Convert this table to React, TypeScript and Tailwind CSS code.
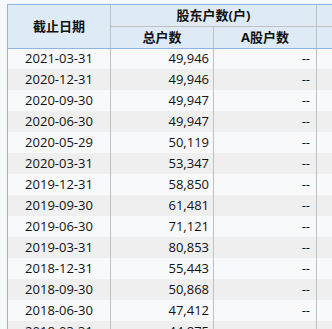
const rows: [string, string][] = [
  ['2021-03-31', '49,946'],
  ['2020-12-31', '49,946'],
  ['2020-09-30', '49,947'],
  ['2020-06-30', '49,947'],
  ['2020-05-29', '50,119'],
  ['2020-03-31', '53,347'],
  ['2019-12-31', '58,850'],
  ['2019-09-30', '61,481'],
  ['2019-06-30', '71,121'],
  ['2019-03-31', '80,853'],
  ['2018-12-31', '55,443'],
  ['2018-09-30', '50,868'],
  ['2018-06-30', '47,412'],
  ['2018-03-31', '44,875'],
];

export default function App() {
  return (
    <div
      className="w-[332px] h-[329px] overflow-hidden bg-[#f5f8fc] pl-[7px] pt-[4px] text-[13px] text-[#111]"
      style={{ fontFamily: '"Open Sans", "Noto Sans CJK SC", sans-serif' }}
    >
      <div className="w-[400px] border-l border-t border-[#8fb4e4]">
        {/* header */}
        <div className="flex h-[44px] bg-[#dfeaf7] border-b border-[#8fb4e4] font-bold">
          <div className="w-[103px] shrink-0 border-r border-[#c0c0c0] flex items-center justify-center">
            截止日期
          </div>
          <div className="w-[206px] shrink-0 border-r border-[#c0c0c0] flex flex-col">
            <div className="h-[22px] border-b border-[#c0c0c0] flex items-center justify-center">
              股东户数(户)
            </div>
            <div className="h-[21px] flex">
              <div className="w-[103px] border-r border-[#c0c0c0] flex items-center justify-center">总户数</div>
              <div className="w-[102px] flex items-center justify-center">A股户数</div>
            </div>
          </div>
          <div className="flex-1 flex flex-col">
            <div className="h-[22px] border-b border-[#c0c0c0]" />
            <div className="h-[21px]" />
          </div>
        </div>

        {/* rows */}
        {rows.map(([date, total], i) => (
          <div
            key={date}
            className={`flex ${i === 0 ? 'h-[20px]' : 'h-[21px]'} ${i % 2 === 0 ? 'bg-[#f8f9fb]' : 'bg-[#efefef]'}`}
          >
            <div className="w-[103px] shrink-0 border-r border-[#c0c0c0] flex items-center justify-center">
              {date}
            </div>
            <div className="w-[103px] shrink-0 border-r border-[#c0c0c0] flex items-center justify-end pr-[4px]">
              {total}
            </div>
            <div className="w-[103px] shrink-0 border-r border-[#c0c0c0] flex items-center justify-end pr-[6px]">
              --
            </div>
            <div className="flex-1" />
          </div>
        ))}
      </div>
    </div>
  );
}
